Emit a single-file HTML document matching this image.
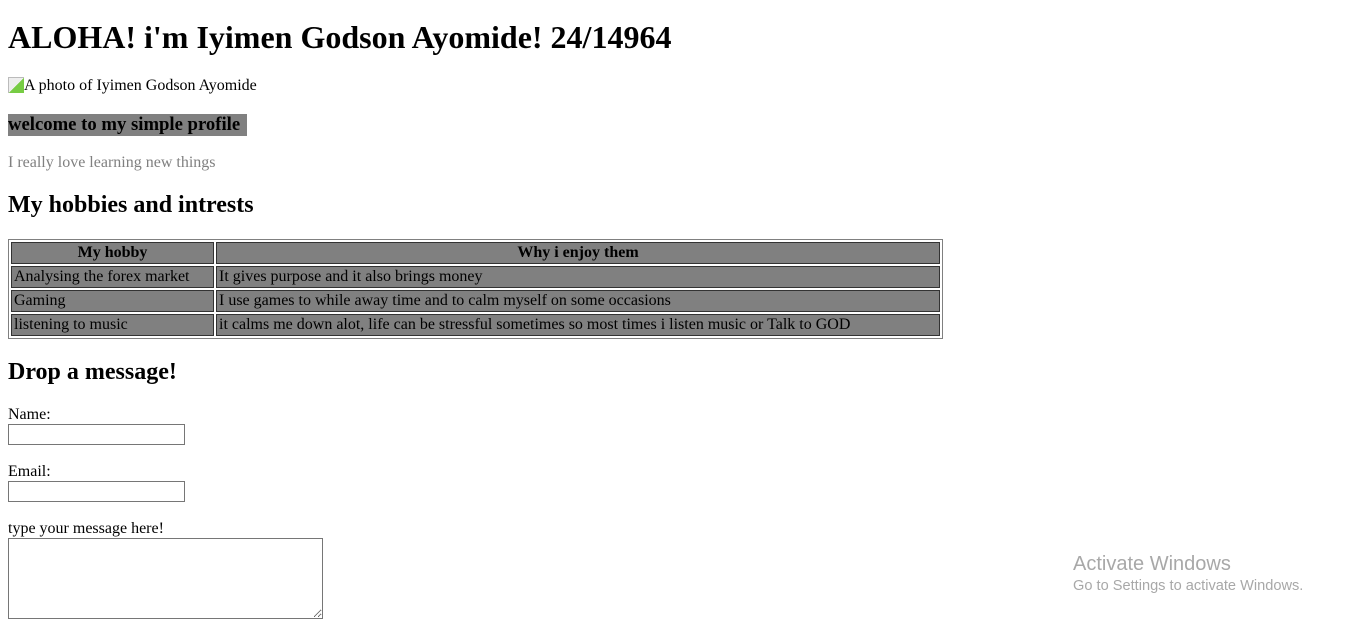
<!DOCTYPE html>
<html><head><style>
body{margin:8px;font-family:"Liberation Serif",serif;font-size:16px;color:#000;}
h1{font-size:32px;margin:19px 0 21px;}
h2{font-size:24px;margin:20px 0;}
h3{font-size:18.7px;margin:18px 0;}
.w{background:#808080;display:inline-block;padding-right:7px;margin:0;}
p.g{color:#808080;}
table{border:1px solid #808080;border-spacing:2px;width:935px;}
td,th{background:#808080;border:1px solid #333;padding:1px 2px;}
th{font-weight:bold;text-align:center;}
input{width:171px;height:17px;border:1px solid #767676;padding:1px 2px;margin:0;display:block;}
textarea{width:309px;height:75px;border:1px solid #767676;margin:0;padding:2px;display:block;}
</style></head><body>
<h1>ALOHA! i'm Iyimen Godson Ayomide! 24/14964</h1>
<div style="margin-top:1px"><span style="display:inline-block;width:16px;height:16px;vertical-align:-3px;border-left:1px solid #bbb;border-top:1px solid #bbb;box-sizing:border-box;background:linear-gradient(135deg,#eee 50%,#7c4 50%)"></span>A photo of Iyimen Godson Ayomide</div>
<div style="margin:19px 0 0"><h3 class="w">welcome to my simple profile</h3></div>
<p class="g" style="margin:18px 0 0">I really love learning new things</p>
<h2>My hobbies and intrests</h2>
<table>
<tr><th style="width:197px">My hobby</th><th>Why i enjoy them</th></tr>
<tr><td>Analysing the forex market</td><td>It gives purpose and it also brings money</td></tr>
<tr><td>Gaming</td><td>I use games to while away time and to calm myself on some occasions</td></tr>
<tr><td>listening to music</td><td>it calms me down alot, life can be stressful sometimes so most times i listen music or Talk to GOD</td></tr>
</table>
<h2>Drop a message!</h2>
<div>Name:</div>
<input type="text">
<div style="margin-top:18px">Email:</div>
<input type="text">
<div style="margin-top:18px">type your message here!</div>
<textarea></textarea>
<div style="position:absolute;left:1073px;top:553px;font-family:'Liberation Sans',sans-serif;color:#a8a8a8;">
<div style="font-size:20px">Activate Windows</div>
<div style="font-size:14.6px;margin-top:2px">Go to Settings to activate Windows.</div>
</div>
</body></html>
